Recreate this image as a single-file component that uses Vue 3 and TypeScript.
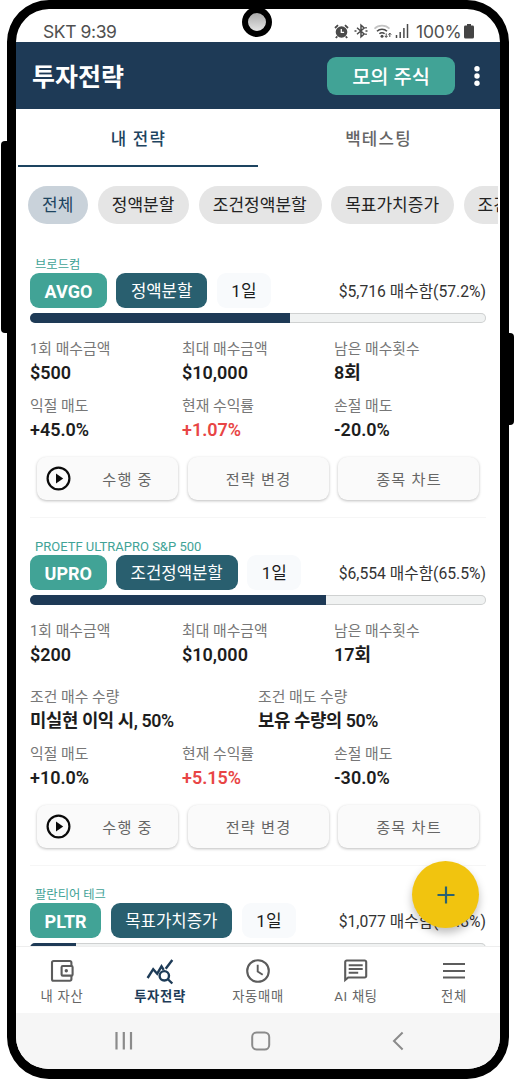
<script setup lang="ts">
interface Stat {
  label: string
  value: string
  up?: boolean
}

interface Strategy {
  name: string
  latin?: boolean
  ticker: string
  method: string
  cycle: string
  bought: string
  progress: number
  amounts: Stat[]
  conditions: Stat[]
  results: Stat[]
}

const filters: string[] = ['전체', '정액분할', '조건정액분할', '목표가치증가', '조건']

const strategies: Strategy[] = [
  {
    name: '브로드컴',
    ticker: 'AVGO',
    method: '정액분할',
    cycle: '1일',
    bought: '$5,716 매수함(57.2%)',
    progress: 57,
    amounts: [
      { label: '1회 매수금액', value: '$500' },
      { label: '최대 매수금액', value: '$10,000' },
      { label: '남은 매수횟수', value: '8회' },
    ],
    conditions: [],
    results: [
      { label: '익절 매도', value: '+45.0%' },
      { label: '현재 수익률', value: '+1.07%', up: true },
      { label: '손절 매도', value: '-20.0%' },
    ],
  },
  {
    name: 'PROETF ULTRAPRO S&P 500',
    latin: true,
    ticker: 'UPRO',
    method: '조건정액분할',
    cycle: '1일',
    bought: '$6,554 매수함(65.5%)',
    progress: 65,
    amounts: [
      { label: '1회 매수금액', value: '$200' },
      { label: '최대 매수금액', value: '$10,000' },
      { label: '남은 매수횟수', value: '17회' },
    ],
    conditions: [
      { label: '조건 매수 수량', value: '미실현 이익 시, 50%' },
      { label: '조건 매도 수량', value: '보유 수량의 50%' },
    ],
    results: [
      { label: '익절 매도', value: '+10.0%' },
      { label: '현재 수익률', value: '+5.15%', up: true },
      { label: '손절 매도', value: '-30.0%' },
    ],
  },
  {
    name: '팔란티어 테크',
    ticker: 'PLTR',
    method: '목표가치증가',
    cycle: '1일',
    bought: '$1,077 매수함(10.8%)',
    progress: 10,
    amounts: [],
    conditions: [],
    results: [],
  },
]
</script>

<template>
  <div class="stage">
    <div class="side-key left"></div>
    <div class="side-key right"></div>
    <div class="phone">
      <div class="camera"></div>

      <div class="status">
        <span class="carrier">SKT 9:39</span>
        <div class="indicators">
          <svg class="alarm" width="15" height="15" viewBox="0 0 15 15">
            <circle cx="7.5" cy="8" r="5.8" fill="#4a4a4a" />
            <path d="M1 4 4 1.2M14 4 11 1.2M3.3 12.4 1.8 14M11.7 12.4l1.5 1.6" stroke="#4a4a4a" stroke-width="1.8" fill="none" />
            <path d="M7.3 5v3.4h2.8" stroke="#fff" stroke-width="1.3" fill="none" />
          </svg>
          <svg class="bt" width="14" height="16" viewBox="0 0 14 16">
            <path d="M3 4.800 10.200 11 7 13.900V2.100L10.200 5 3 11.200" stroke="#4a4a4a" stroke-width="1.500" fill="none" />
            <path d="M.5 8h2M11.500 8h2M12 4v1.600M12 10.400V12" stroke="#4a4a4a" stroke-width="1.500" />
          </svg>
          <svg class="wifi" width="18" height="15" viewBox="0 0 18 15">
            <path d="M.5 4.600C4.300.5 11.700.5 15.500 4.600" stroke="#c4c4c4" stroke-width="1.700" fill="none" />
            <path d="M3 7.200c2.700-2.700 7.300-2.700 10 0M5.400 9.800c1.500-1.500 3.700-1.500 5.200 0" stroke="#4a4a4a" stroke-width="1.600" fill="none" />
            <circle cx="8" cy="12.200" r="1.500" fill="#4a4a4a" />
            <path d="M12.200 9.400v3.800m-1.400-1.300 1.400 1.500 1.400-1.500M15.800 13V9.200m-1.400 1.400 1.400-1.500 1.400 1.500" stroke="#4a4a4a" stroke-width="1" fill="none" />
          </svg>
          <svg class="signal" width="14" height="14" viewBox="0 0 14 14">
            <path d="M1.500 11v3M5.200 8v6M8.900 4v10M12.500 0v14" stroke="#4a4a4a" stroke-width="1.500" />
          </svg>
          <span class="percent">100%</span>
          <svg class="battery" width="10" height="15" viewBox="0 0 10 15">
            <path d="M3 0h4v1.600h1.600A1.400 1.400 0 0 1 10 3v10a1.600 1.600 0 0 1-1.600 1.600H1.600A1.600 1.600 0 0 1 0 13V3a1.400 1.400 0 0 1 1.400-1.400H3z" fill="#444" />
          </svg>
        </div>
      </div>

      <header class="appbar">
        <h1>투자전략</h1>
        <button class="mock">모의 주식</button>
        <svg class="more" width="6" height="22" viewBox="0 0 6 22">
          <circle cx="3" cy="3.800" r="2.700" fill="#fff" />
          <circle cx="3" cy="11" r="2.700" fill="#fff" />
          <circle cx="3" cy="18.200" r="2.700" fill="#fff" />
        </svg>
      </header>

      <div class="tabs">
        <div class="tab active">내 전략</div>
        <div class="tab">백테스팅</div>
      </div>

      <div class="filters">
        <span v-for="(f, i) in filters" :key="f" class="chip" :class="{ on: i === 0 }">{{ f }}</span>
      </div>

      <main class="list">
        <section v-for="s in strategies" :key="s.ticker" class="card">
          <div class="name" :class="{ latin: s.latin }">{{ s.name }}</div>
          <div class="tags">
            <span class="tag ticker">{{ s.ticker }}</span>
            <span class="tag method">{{ s.method }}</span>
            <span class="tag cycle">{{ s.cycle }}</span>
            <span class="bought">{{ s.bought }}</span>
          </div>
          <div class="bar"><div class="fill" :style="{ width: s.progress + '%' }"></div></div>
          <template v-if="s.amounts.length">
            <div class="stats first">
              <div v-for="a in s.amounts" :key="a.label" class="stat">
                <div class="label">{{ a.label }}</div>
                <div class="value">{{ a.value }}</div>
              </div>
            </div>
            <div v-if="s.conditions.length" class="stats two">
              <div v-for="c in s.conditions" :key="c.label" class="stat">
                <div class="label">{{ c.label }}</div>
                <div class="value">{{ c.value }}</div>
              </div>
            </div>
            <div class="stats">
              <div v-for="r in s.results" :key="r.label" class="stat">
                <div class="label">{{ r.label }}</div>
                <div class="value" :class="{ up: r.up }">{{ r.value }}</div>
              </div>
            </div>
            <div class="actions">
              <button class="action run">
                <svg width="25" height="25" viewBox="0 0 25 25">
                  <circle cx="12.500" cy="12.500" r="10.900" fill="none" stroke="#0a0a0a" stroke-width="2.200" />
                  <path d="M10 7.600v9.800l7.200-4.900z" fill="#0a0a0a" />
                </svg>
                <span>수행 중</span>
              </button>
              <button class="action">전략 변경</button>
              <button class="action">종목 차트</button>
            </div>
          </template>
        </section>
      </main>

      <button class="fab">
        <svg width="18" height="18" viewBox="0 0 18 18">
          <path d="M9 .5v17M.5 9h17" stroke="#2a6272" stroke-width="2.200" />
        </svg>
      </button>

      <nav class="nav">
        <div class="item">
          <svg width="28" height="28" viewBox="0 0 28 28" fill="none" stroke="#5c5c5c" stroke-width="2.100">
            <path d="M23.400 9V5.500A1.500 1.500 0 0 0 21.900 4H5.500A1.500 1.500 0 0 0 4 5.500v16.800a1.500 1.500 0 0 0 1.500 1.500h16.400a1.500 1.500 0 0 0 1.500-1.500V19" />
            <rect x="13.600" y="9" width="11" height="9.600" rx="1.200" />
            <circle cx="18.300" cy="13.800" r="1.700" fill="#5c5c5c" stroke="none" />
          </svg>
          <span>내 자산</span>
        </div>
        <div class="item active">
          <svg width="28" height="28" viewBox="0 0 28 28" fill="none" stroke="#1d3b57" stroke-width="2.400">
            <path d="M1.600 21 7.200 12.200l4 4.500 4.300-7.400 2.200 3.500M19.700 11.800 26.300 3" />
            <circle cx="18.300" cy="18.800" r="4.700" />
            <path d="m21.700 22 4.600 4.500" />
          </svg>
          <span>투자전략</span>
        </div>
        <div class="item">
          <svg width="28" height="28" viewBox="0 0 28 28" fill="none" stroke="#5c5c5c" stroke-width="2.100">
            <circle cx="14" cy="14" r="10.800" />
            <path d="M13.700 7.800v6.700l5 3.300" stroke-width="1.900" />
          </svg>
          <span>자동매매</span>
        </div>
        <div class="item">
          <svg width="28" height="28" viewBox="0 0 28 28" fill="none" stroke="#5c5c5c" stroke-width="2.100">
            <path d="M3.200 23V5a1.500 1.500 0 0 1 1.500-1.500h18A1.500 1.500 0 0 1 24.200 5v14a1.500 1.500 0 0 1-1.500 1.500H6.200z" />
            <path d="M6.700 8.300h14M6.700 12h14M6.700 15.700h9.500" />
          </svg>
          <span>AI 채팅</span>
        </div>
        <div class="item">
          <svg width="28" height="28" viewBox="0 0 28 28" fill="none" stroke="#5c5c5c" stroke-width="2.200">
            <path d="M3 7h22M3 14h22M3 20.500h22" />
          </svg>
          <span>전체</span>
        </div>
      </nav>

      <div class="sysnav">
        <svg width="20" height="20" viewBox="0 0 20 20"><path d="M2.500 1v17.600M9.800 1v17.600M17 1v17.600" stroke="#8b8b8b" stroke-width="2.200" /></svg>
        <svg width="20" height="20" viewBox="0 0 20 20"><rect x="1.200" y="1.500" width="17" height="17" rx="4.500" fill="none" stroke="#8b8b8b" stroke-width="2" /></svg>
        <svg width="20" height="20" viewBox="0 0 20 20"><path d="M14.600 1.500 6 10l8.600 8.500" fill="none" stroke="#8b8b8b" stroke-width="2" /></svg>
      </div>
    </div>
  </div>
</template>

<style>
html,
body {
  margin: 0;
  background: #fff;
  overflow: hidden;
}
</style>

<style scoped>
* {
  box-sizing: border-box;
}
.stage {
  position: relative;
  width: 516px;
  height: 1080px;
  padding-left: 7px;
  overflow: hidden;
  font-family: Roboto, 'Noto Sans CJK KR', sans-serif;
  color: #1d1d1d;
  white-space: nowrap;
}
.side-key {
  position: absolute;
  background: #000;
}
.side-key.left {
  left: 1px;
  top: 141px;
  width: 12px;
  height: 192px;
  border-radius: 4px;
}
.side-key.right {
  left: 502px;
  top: 333px;
  width: 12px;
  height: 92px;
  border-radius: 4px;
}
.phone {
  position: relative;
  width: 502px;
  height: 1079px;
  border: 9px solid #000;
  border-bottom-width: 10px;
  border-radius: 42px;
  background: #fff;
  overflow: hidden;
  display: flex;
  flex-direction: column;
}
.camera {
  position: absolute;
  z-index: 3;
  left: 226px;
  top: -2px;
  width: 30px;
  height: 30px;
  border: 6px solid #000;
  border-radius: 50%;
  background: linear-gradient(#aaa, #e4e4e4);
}
.status {
  flex: none;
  height: 33px;
  padding: 10px 26px 0 27px;
  display: flex;
  justify-content: space-between;
  font-family: Inter, Roboto, sans-serif;
  color: #505050;
}
.carrier {
  font-size: 17.500px;
  line-height: 25px;
  letter-spacing: -0.400px;
}
.indicators {
  display: flex;
  align-items: center;
  height: 24px;
}
.bt {
  margin-left: 5px;
}
.wifi {
  margin-left: 6px;
}
.signal {
  margin-left: 3px;
}
.percent {
  margin-left: 7px;
  width: 47px;
  font-size: 17.500px;
  line-height: 24px;
  padding-top: 1px;
  letter-spacing: -0.200px;
}
.battery {
  margin-left: 1px;
}
.alarm {
  margin-left: -2px;
}
.appbar {
  flex: none;
  height: 67px;
  padding: 0 20px 0 16px;
  display: flex;
  align-items: center;
  background: #1e3a56;
  color: #fff;
}
h1 {
  margin: 0;
  padding-top: 4px;
  flex: 1;
  font-size: 25px;
  font-weight: 700;
  line-height: 34px;
}
button {
  border: 0;
  padding: 0;
  font-family: inherit;
  white-space: nowrap;
}
.mock {
  width: 128px;
  height: 38px;
  border-radius: 9px;
  background: #41a396;
  color: #fff;
  font-size: 19.800px;
  font-weight: 500;
}
.more {
  margin-left: 19px;
}
.tabs {
  flex: none;
  height: 58px;
  padding: 0 2px;
  display: flex;
}
.tab {
  flex: 1;
  display: flex;
  align-items: center;
  justify-content: center;
  padding: 1px 0 0 1px;
  font-size: 16.800px;
  font-weight: 500;
  letter-spacing: 1.200px;
  color: #666;
  border-bottom: 2px solid transparent;
}
.tab.active {
  color: #1d4460;
  border-bottom-color: #1d4460;
}
.filters {
  flex: none;
  margin: 19px 2px 0;
  padding-left: 10px;
  display: flex;
  gap: 9.500px;
  overflow: hidden;
}
.chip {
  flex: none;
  height: 38px;
  padding: 0 15px 0 14px;
  border-radius: 19px;
  background: #e5e5e5;
  color: #222;
  font-size: 17px;
  line-height: 39px;
}
.chip.on {
  background: #c9d2da;
  color: #1d4460;
}
.list {
  flex: 1;
  min-height: 0;
  overflow: hidden;
  padding: 11px 14px 0;
}
.card {
  border-top: 1px solid #f6f6f6;
  height: 348px;
  padding-top: 20px;
}
.card:first-child {
  border-top-color: transparent;
  height: 282px;
}
.name {
  height: 17px;
  padding-left: 5px;
  font-size: 12.300px;
  line-height: 18px;
  color: #41a396;
}
.name.latin {
  font-size: 13px;
}
.tags {
  display: flex;
  align-items: center;
  gap: 9.500px;
  height: 35px;
}
.tag {
  height: 35px;
  padding: 0 15px;
  border-radius: 9px;
  line-height: 37px;
  font-size: 17px;
}
.ticker {
  padding: 0 14.600px;
  background: #41a396;
  color: #fff;
  font-size: 18px;
  font-weight: 700;
}
.method {
  padding: 0 15px 0 14.500px;
  background: #295f6f;
  color: #fff;
  font-size: 16.700px;
}
.cycle {
  padding: 0 14.500px;
  background: #f8fafc;
}
.bought {
  margin-left: auto;
  padding-bottom: 1px;
  font-size: 15.700px;
  color: #333;
}
.bar {
  margin-top: 5px;
  height: 10px;
  border-radius: 5px;
  background: #f0f2f2;
  box-shadow: inset 0 0 0 1px #cfd1d1;
  overflow: hidden;
}
.fill {
  height: 10px;
  background: #1e3a56;
}
.stats {
  margin-top: 9px;
  display: grid;
  grid-template-columns: repeat(3, 1fr);
}
.stats.first {
  margin-top: 13px;
}
.stats.two {
  margin-top: 18px;
  grid-template-columns: repeat(2, 1fr);
}
.label {
  height: 24px;
  line-height: 27px;
  font-size: 14.850px;
  color: #777;
}
.value {
  height: 24px;
  line-height: 25px;
  font-size: 18px;
  font-weight: 600;
}
.two .value {
  font-size: 17.800px;
  letter-spacing: -0.400px;
}
.value.up {
  color: #e84545;
}
.actions {
  margin: 16px 7px 0;
  display: grid;
  grid-template-columns: repeat(3, 1fr);
  gap: 9.500px;
}
.action {
  height: 43px;
  border-radius: 9px;
  background: #fafafa;
  box-shadow: 0 1px 3px rgba(0, 0, 0, 0.260);
  color: #666;
  padding-left: 1px;
  padding-bottom: 1px;
  font-size: 15.200px;
  letter-spacing: 1.200px;
}
.run {
  display: flex;
  align-items: center;
  padding-left: 9px;
}
.run span {
  flex: 1;
  padding-left: 6px;
}
.fab {
  position: absolute;
  z-index: 2;
  left: 396px;
  top: 852px;
  width: 67px;
  height: 67px;
  border-radius: 50%;
  background: #f1c40f;
  box-shadow: 0 5px 9px rgba(0, 0, 0, 0.250);
  display: flex;
  align-items: center;
  justify-content: center;
}
.nav {
  flex: none;
  height: 67px;
  display: grid;
  grid-template-columns: repeat(5, 98px);
  justify-content: center;
  background: #fff;
  border-top: 1px solid #eee;
}
.item {
  display: flex;
  flex-direction: column;
  align-items: center;
  padding-top: 10px;
  font-size: 13.300px;
  letter-spacing: 0.700px;
  line-height: 24px;
  color: #666;
}
.item.active {
  color: #1d3b57;
  font-weight: 700;
}
.sysnav {
  flex: none;
  height: 56px;
  padding: 0 92px 0 98px;
  display: flex;
  align-items: center;
  justify-content: space-between;
  background: #f6f6f6;
}
</style>
